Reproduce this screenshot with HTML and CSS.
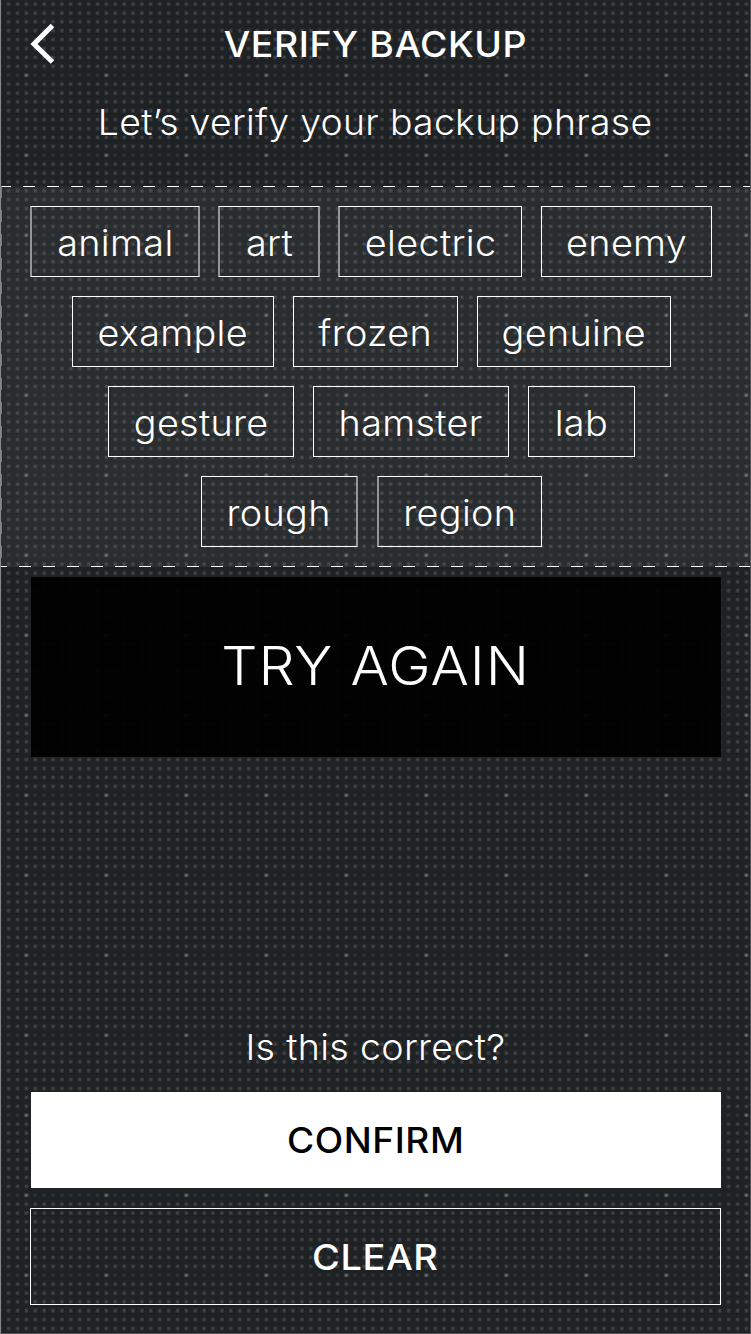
FILE: index.html
```
<!DOCTYPE html>
<html lang="en">
<head>
<meta charset="utf-8">
<title>Verify backup</title>
<link rel="stylesheet" href="styles.css">
</head>
<body>
<main class="screen">
  <svg class="texture" width="751" height="1334" aria-hidden="true">
    <defs>
      <pattern id="dots" x="21.7" y="70.7" width="80" height="80" patternUnits="userSpaceOnUse">
        <path d="M3 4.500H80" stroke="#303335" stroke-width="3.200" stroke-dasharray="3.200 5.689"/>
        <path d="M3 13.400H80M3 22.300H80M3 31.200H80M3 40H80M3 48.900H80M3 57.800H80M3 66.700H80M3 75.600H80" stroke="#404142" stroke-width="3.300" stroke-dasharray="3.300 5.589"/>
        <rect x="2.800" y="2.900" width="3.500" height="3.200" fill="#626667"/>
      </pattern>
    </defs>
    <rect width="751" height="1334" fill="url(#dots)"/>
  </svg>
  <header class="header">
    <svg class="back" width="30" height="44" viewBox="0 0 30 44"><path d="M24.500 3.500 6 22l18.500 18" fill="none" stroke="#fff" stroke-width="5"/></svg>
    <h1 class="title"><span>VERIFY BACKUP</span></h1>
  </header>
  <p class="intro"><span>Let’s verify your backup phrase</span></p>
  <section class="panel">
    <svg class="dashes" width="751" height="381" aria-hidden="true">
      <path class="dash-top" d="M0 .5H751"/><path class="dash-bottom" d="M0 380.500H751"/><path class="dash-side" d="M1 0V381"/>
    </svg>
    <div class="row first">
      <button class="chip w170 soft-left soft-right"><span>animal</span></button><button class="chip w102 soft-left soft-right"><span>art</span></button><button class="chip w184 soft-left"><span>electric</span></button><button class="chip w171"><span>enemy</span></button>
    </div>
    <div class="row">
      <button class="chip w202"><span>example</span></button><button class="chip w165"><span>frozen</span></button><button class="chip w194"><span>genuine</span></button>
    </div>
    <div class="row">
      <button class="chip w186"><span>gesture</span></button><button class="chip w196"><span>hamster</span></button><button class="chip w107"><span>lab</span></button>
    </div>
    <div class="row">
      <button class="chip w157 soft-right"><span>rough</span></button><button class="chip w165 soft-left"><span>region</span></button>
    </div>
  </section>
  <div class="retry"><span>TRY AGAIN</span></div>
  <footer class="footer">
    <p class="question"><span>Is this correct?</span></p>
    <button class="action confirm"><span>CONFIRM</span></button>
    <button class="action clear"><span>CLEAR</span></button>
  </footer>
</main>
</body>
</html>
```
FILE: styles.css
```
* { box-sizing: border-box; }
body { margin: 0; background: #1e2225; }
p, h1 { margin: 0; }
button { padding: 0; background: none; border: 0; font: inherit; color: inherit; letter-spacing: inherit; }
span { display: inline-block; }
.screen {
  position: relative; isolation: isolate;
  display: flex; flex-direction: column;
  width: 751px; height: 1334px; overflow: hidden;
  border: 1px solid #505456; border-top: 0; border-left-color: #85898b;
  color: #fff; font: 340 36px/44px Inter, "Liberation Sans", sans-serif;
  letter-spacing: .3px;
}
.texture { position: absolute; left: -1px; top: 0; z-index: -1; }
.header { display: grid; grid-template-columns: 80px 1fr 80px; height: 88px; padding-top: 22px; }
.back { margin-left: 27px; }
.title { text-align: center; font-size: 35px; line-height: 45px; font-weight: 550; letter-spacing: .6px; }
.title span { transform: scaleX(1.065); }
.intro { height: 98px; padding-top: 12px; text-align: center; }
.intro span { transform: scaleX(1.038); }
.panel {
  position: relative; display: flex; flex-direction: column; gap: 19px;
  height: 381px; padding: 20px 8px 0 0; background: rgba(255, 255, 255, .05);
}
.dashes { position: absolute; left: -1px; top: 0; pointer-events: none; }
.dashes path { fill: none; stroke: #fff; stroke-width: 1; stroke-dasharray: 12 12; }
.dashes .dash-top { stroke-dashoffset: 1; }
.dashes .dash-bottom { stroke-dashoffset: 5; }
.dashes .dash-side { stroke: #74787a; stroke-width: 2; }
.row { display: flex; justify-content: center; gap: 19px; height: 71px; }
.row.first { gap: 18px; padding-right: 1px; }
.row.first .w171 { margin-left: 1px; }
.chip { border: 1px solid #fff; padding-top: 2px; }
.chip span { transform: scaleX(1.05); }
.soft-left { border-left: 2px solid #94979a; }
.soft-right { border-right: 2px solid #94979a; }
.w170 { width: 170px; } .w102 { width: 102px; } .w184 { width: 184px; } .w171 { width: 171px; }
.w202 { width: 202px; } .w165 { width: 165px; } .w194 { width: 194px; }
.w186 { width: 186px; } .w196 { width: 196px; } .w107 { width: 107px; }
.w157 { width: 157px; }
.retry {
  display: flex; align-items: center; justify-content: center;
  height: 180px; margin: 10px 29px 0 30px; padding-bottom: 2px; background: rgba(0, 0, 0, .93);
  font-size: 53px; line-height: 64px; letter-spacing: 1px;
}
.retry span { transform: scaleX(1.075); }
.footer { display: flex; flex-direction: column; margin: 268px 29px 0; }
.question { height: 67px; text-align: center; }
.question span { transform: scaleX(1.045); }
.action { height: 97px; font-size: 35px; font-weight: 550; letter-spacing: .5px; }
.action span { transform: scaleX(1.06); }
.confirm { height: 96px; margin: 0 0 20px 1px; background: #fff; color: #000; }
.clear { border: 1px solid #fff; }
.clear span { transform: scaleX(1.085); }
```
